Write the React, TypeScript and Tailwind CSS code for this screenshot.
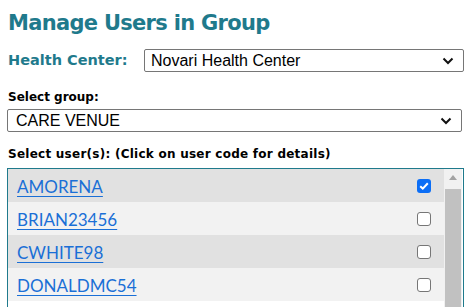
import React from "react";

const users = [
  { code: "AMORENA", checked: true },
  { code: "BRIAN23456", checked: false },
  { code: "CWHITE98", checked: false },
  { code: "DONALDMC54", checked: false },
];

const Chevron = () => (
  <svg width="12" height="8" viewBox="0 0 12 8" className="absolute right-[9px] top-1/2 -translate-y-1/2">
    <path d="M1.5 1.5 6 6l4.5-4.5" fill="none" stroke="#111" strokeWidth="2" />
  </svg>
);

const FakeSelect = ({ value, className }: { value: string; className: string }) => (
  <div
    className={`relative h-[23px] border border-[#767676] rounded-[2px] bg-white pl-[6px] text-[16px] leading-[21px] text-black font-['Liberation_Sans',Arial,sans-serif] ${className}`}
  >
    {value}
    <Chevron />
  </div>
);

export default function App() {
  return (
    <div className="w-[474px] h-[307px] overflow-hidden bg-white font-['DejaVu_Sans',Verdana,sans-serif]">
      <h1 className="pl-[8px] pt-[10px] text-[21px] leading-[26px] font-bold text-[#1f7a8c] tracking-[-0.7px]">
        Manage Users in Group
      </h1>
      <div className="flex items-center mt-[13px]">
        <span className="pl-[8px] w-[144px] text-[14.5px] font-bold text-[#1f7a8c]">Health Center:</span>
        <FakeSelect value="Novari Health Center" className="w-[320px]" />
      </div>
      <div className="pl-[8px] mt-[18px] text-[12px] leading-[15px] font-bold text-black">Select group:</div>
      <FakeSelect value="CARE VENUE" className="ml-[7px] mt-[4px] w-[455px] pl-[8px]" />
      <div className="pl-[8px] mt-[15px] text-[12px] leading-[15px] font-bold text-black tracking-[0.25px]">
        Select user(s): (Click on user code for details)
      </div>
      <div className="ml-[7px] mt-[6px] w-[457px] h-[150px] border border-[#1f7a8c] flex">
        <div className="flex-1 flex flex-col">
          {users.map((u, i) => (
            <div
              key={u.code}
              className={`h-[33px] shrink-0 flex items-center justify-between pl-[9px] pr-[13px] ${i % 2 === 0 ? "bg-[#e1e1e1]" : "bg-[#f2f2f2]"}`}
            >
              <a className="pt-[2px] text-[17px] text-[#1a6fd6] underline underline-offset-[3px] font-['Lato','Open_Sans',sans-serif]">
                {u.code}
              </a>
              {u.checked ? (
                <span className="w-[14px] h-[14px] rounded-[3px] bg-[#0b6ef6] flex items-center justify-center">
                  <svg width="10" height="8" viewBox="0 0 10 8">
                    <path d="M1.2 4.2 3.8 6.6 8.8 1.2" fill="none" stroke="white" strokeWidth="2" />
                  </svg>
                </span>
              ) : (
                <span className="w-[14px] h-[14px] rounded-[3px] border border-[#767676] bg-white" />
              )}
            </div>
          ))}
        </div>
        <div className="w-[18px] mr-[1px] bg-[#f1f1f1] flex flex-col items-center">
          <div className="h-[17px] flex items-center justify-center">
            <svg width="8" height="5" viewBox="0 0 8 5">
              <path d="M0 5 4 0l4 5z" fill="#a3a3a3" />
            </svg>
          </div>
          <div className="mt-[3px] w-[16px] flex-1 bg-[#c1c1c1]" />
        </div>
      </div>
    </div>
  );
}
